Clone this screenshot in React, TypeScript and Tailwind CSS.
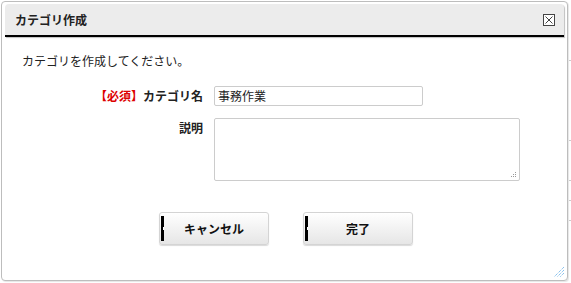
import React from "react";

const font = { fontFamily: '"Noto Sans CJK JP", "Liberation Sans", sans-serif' };

function Btn({ label }: { label: string }) {
  return (
    <button
      className="relative w-[110px] h-[33px] rounded-[3px] border border-[#d4d4d4] bg-gradient-to-b from-white to-[#e6e6e6] shadow-[0_1px_1px_rgba(0,0,0,0.15)] text-[12px] font-bold text-[#111] flex items-center justify-center"
      style={font}
    >
      <span className="absolute left-[1px] top-[3px] w-[3px] h-[25px] bg-black" />
      <span className="absolute left-[3px] top-[14px] w-[1px] h-[3px] bg-white" />
      {label}
    </button>
  );
}

export default function App() {
  return (
    <div className="w-[571px] h-[283px] bg-white relative overflow-hidden" style={font}>
      <div className="absolute right-0 top-[60px] w-[2px] h-[1px] bg-[#ccc]" />
      <div className="absolute right-0 top-[140px] w-[2px] h-[1px] bg-[#ccc]" />
      <div className="absolute right-0 top-[180px] w-[2px] h-[1px] bg-[#ccc]" />
      <div className="absolute right-0 top-[200px] w-[2px] h-[1px] bg-[#ccc]" />
      <div className="absolute right-0 top-[220px] w-[2px] h-[1px] bg-[#ccc]" />
      <div className="ml-[1px] pt-[1px]">
        <div className="relative w-[567px] h-[280px] border border-[#bdbdbd] rounded-[4px] bg-white shadow-[1px_1px_1px_rgba(0,0,0,0.1)] flex flex-col">
          <div className="mx-[3px] mt-[2px] h-[33px] bg-[#ececec] rounded-t-[4px] border-b-2 border-black shadow-[1px_1px_1px_rgba(0,0,0,0.25)] flex items-center justify-between pl-[10px] pr-[9px]">
            <span className="text-[12px] font-bold text-[#222]">カテゴリ作成</span>
            <span className="w-[12px] h-[12px] border border-[#444] bg-white flex items-center justify-center">
              <svg width="8" height="8" viewBox="0 0 8 8">
                <path d="M0.5 0.5L7.5 7.5M7.5 0.5L0.5 7.5" stroke="#444" strokeWidth="1" />
              </svg>
            </span>
          </div>
          <div className="pl-[20px] pt-[15px] text-[12px] text-[#222] leading-[18px]">カテゴリを作成してください。</div>
          <div className="mt-[16px] flex items-center">
            <div className="w-[201px] text-right text-[12px] font-bold text-[#222]">
              <span className="text-[#d00]">【必須】</span>カテゴリ名
            </div>
            <div className="ml-[11px] w-[209px] h-[20px] border border-[#ccc] rounded-[2px] text-[12px] text-[#222] flex items-center pl-[3px]">事務作業</div>
          </div>
          <div className="mt-[12px] flex items-start">
            <div className="w-[201px] text-right text-[12px] font-bold text-[#222] pt-[1px]">説明</div>
            <div className="relative ml-[11px] w-[306px] h-[63px] border border-[#ccc] rounded-[2px]">
              <svg className="absolute right-[2px] bottom-[2px]" width="6" height="6" viewBox="0 0 6 6">
                <rect x="4" y="0" width="1" height="1" fill="#999" />
                <rect x="2" y="2" width="1" height="1" fill="#999" />
                <rect x="4" y="2" width="1" height="1" fill="#999" />
                <rect x="0" y="4" width="1" height="1" fill="#999" />
                <rect x="2" y="4" width="1" height="1" fill="#999" />
                <rect x="4" y="4" width="1" height="1" fill="#999" />
              </svg>
            </div>
          </div>
          <div className="mt-[31px] flex pl-[157px] gap-[34px]">
            <Btn label="キャンセル" />
            <Btn label="完了" />
          </div>
          <svg className="absolute right-[2px] bottom-[2px]" width="12" height="12" viewBox="0 0 12 12">
            <path d="M11 1L1 11M11 4L4 11M11 7L7 11" stroke="#5aa9e6" strokeWidth="1" strokeDasharray="1 1" />
          </svg>
        </div>
      </div>
    </div>
  );
}
